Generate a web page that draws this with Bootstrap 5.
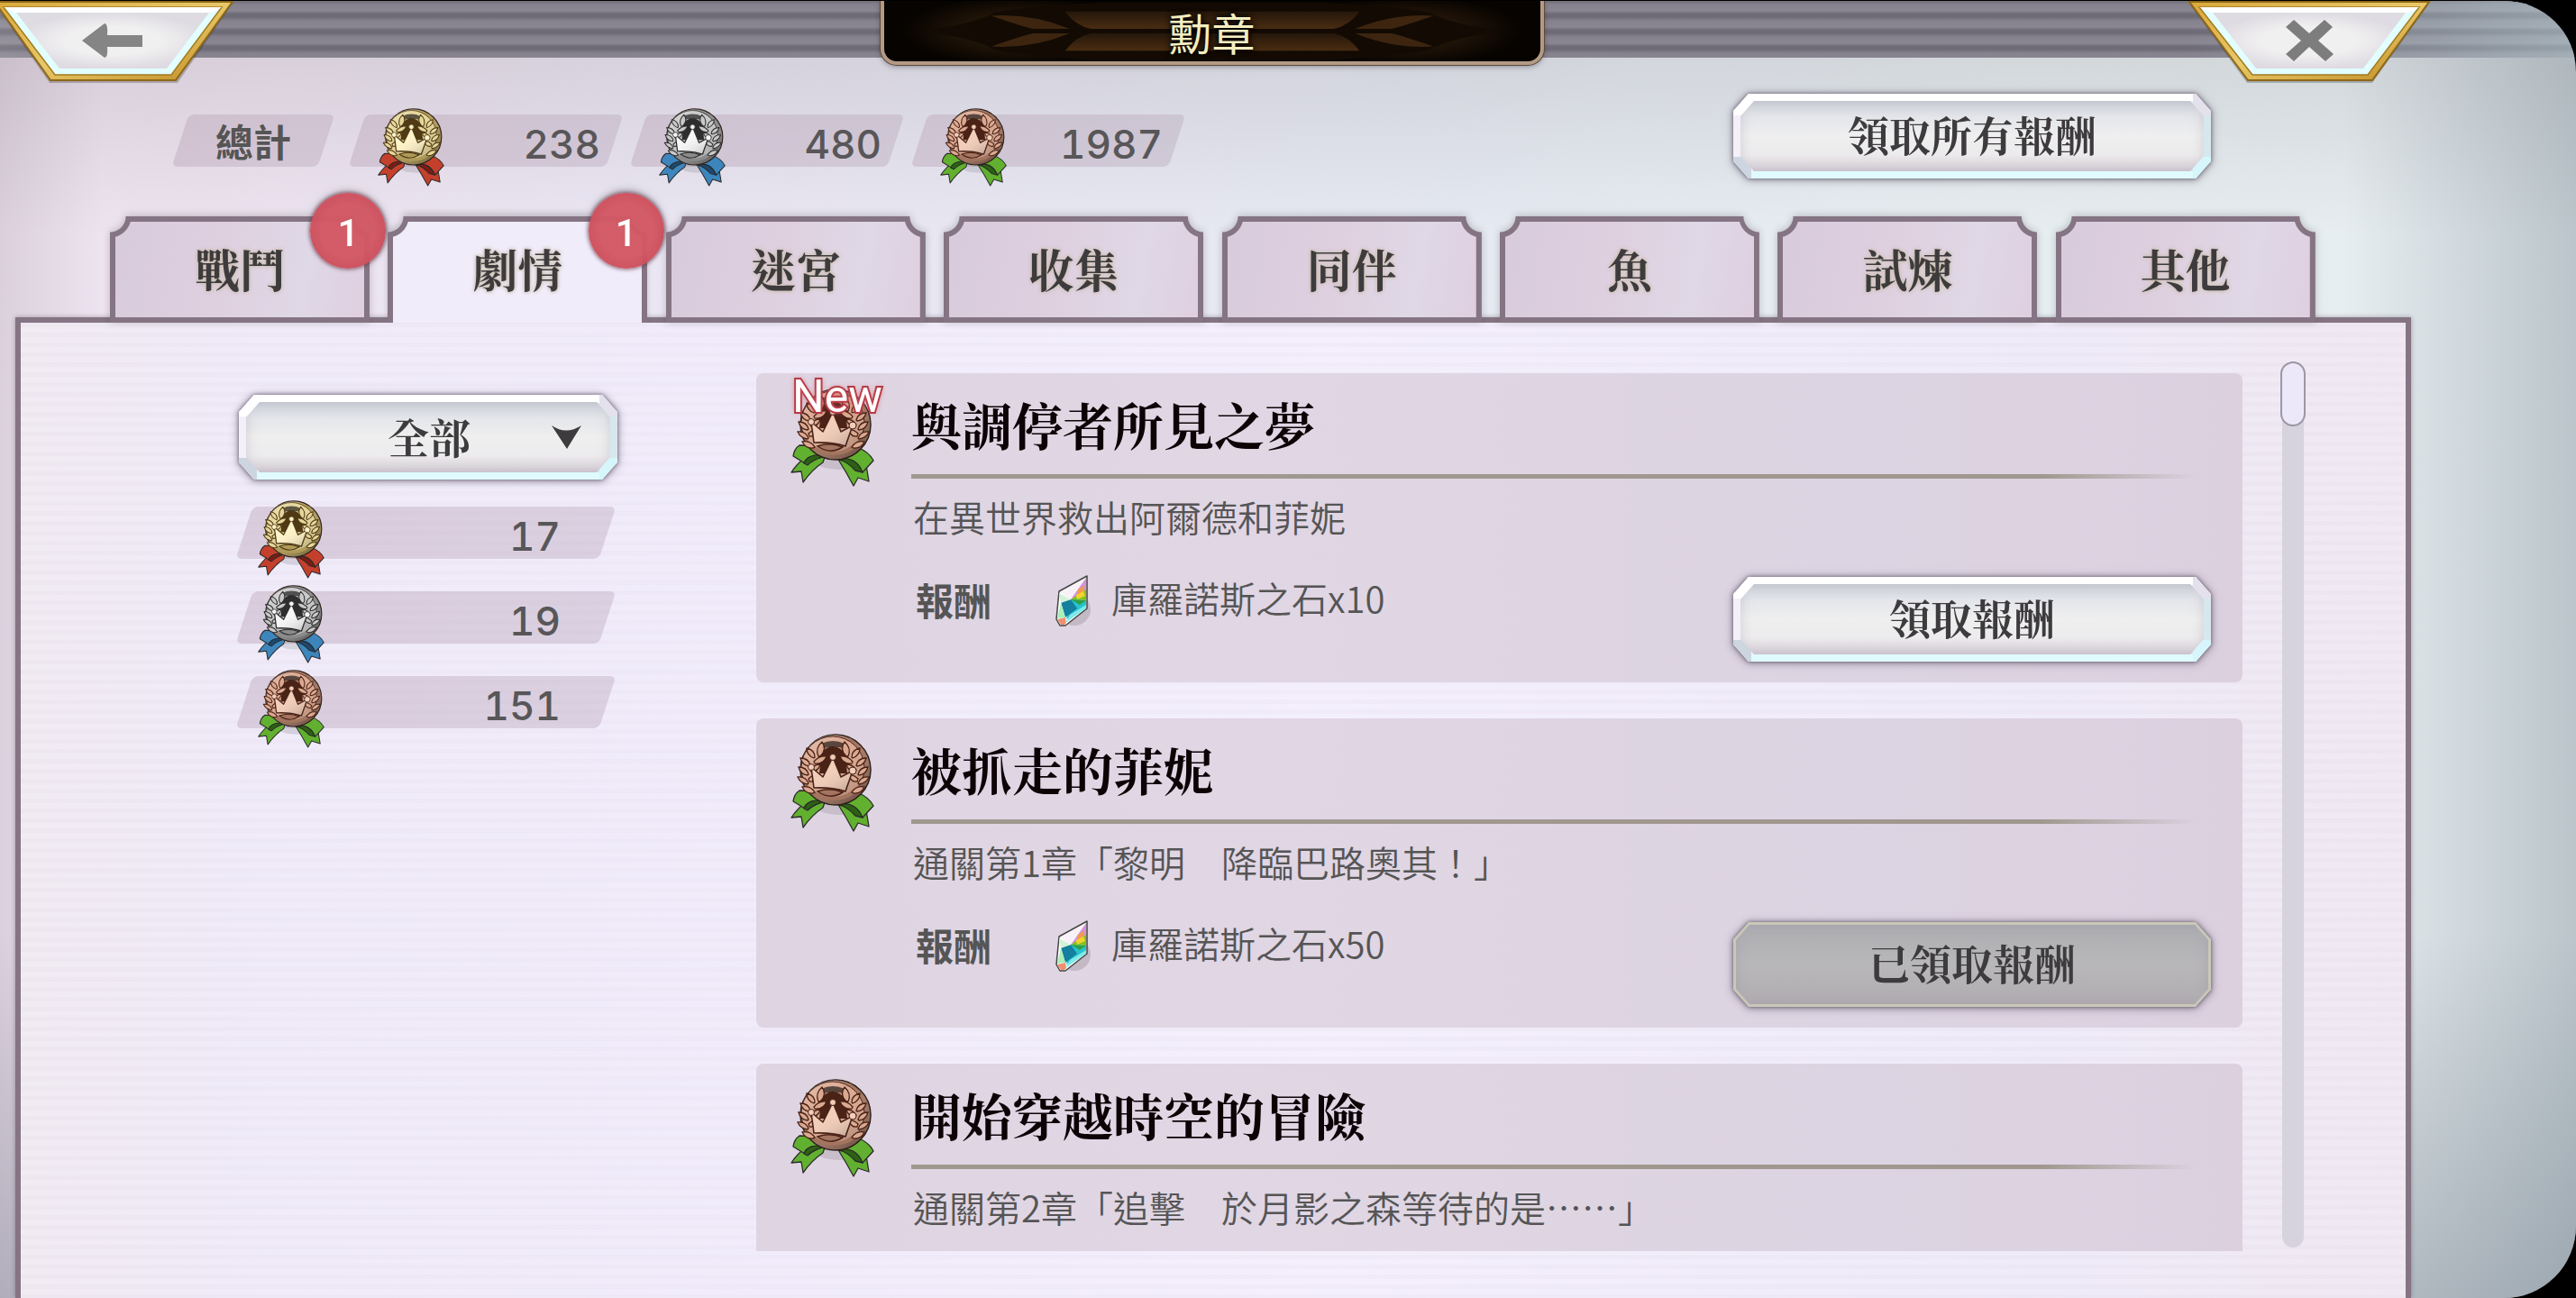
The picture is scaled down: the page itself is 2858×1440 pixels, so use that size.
<!DOCTYPE html>
<html lang="zh-Hant">
<head>
<meta charset="utf-8">
<meta name="viewport" content="width=device-width, initial-scale=1">
<title>勳章</title>
<link href="https://cdn.jsdelivr.net/npm/bootstrap@5.3.0/dist/css/bootstrap.min.css" rel="stylesheet">
<style>
:root{--edge:#857483;--ink:#3d3b3d;--serif:"Noto Serif CJK TC","Noto Sans CJK TC",serif;--sans:"Noto Sans CJK TC",sans-serif;--num:Inter,"Noto Sans CJK TC",sans-serif}
body{background:#000;font-family:var(--sans);color:#555;overflow:hidden}
.stage{height:100vh;border-top:1px solid #000;border-radius:0 80px 80px 0;overflow:hidden;
 background:
 linear-gradient(90deg,rgba(120,110,125,.16),transparent 4%,transparent 91%,rgba(110,125,138,.36)),
 linear-gradient(180deg,rgba(120,115,120,.24),transparent 18%,transparent 72%,rgba(100,110,125,.36)),
 linear-gradient(100deg,#efe2ef 0,#ebe6f3 22%,#e6e9f3 50%,#e7eef1 72%,#e6edef 100%)}
/* top bar */
.topbar{height:63px;background:linear-gradient(90deg,rgba(255,255,255,.1),transparent 8%,transparent 85%,rgba(190,215,220,.5)),repeating-linear-gradient(180deg,#706c79 0,#85828e 4px,#8a8792 11px,#706d7a 14px,#6d6a77 18px)}
.back-btn{margin-left:-8px}
.close-btn{margin-right:161px}
.crown-title{width:736px;height:71px;border:4px solid #b39a85;border-top:0;border-radius:0 0 18px 18px;background:#060300;box-shadow:0 0 0 1px #5d4a3a,0 2px 6px rgba(0,0,0,.35);overflow:hidden}
.crown-title svg{left:0;top:0;width:100%;height:100%}
.crown-title h1{font-size:48px;line-height:68px;font-weight:400;color:#f4eec0;text-shadow:0 0 6px #000,0 0 6px #000}
.corner-btn{width:270px;height:98px;border:0;background:none;padding:0;flex:none}
/* totals */
.totals{margin:63px 405px 0 190px;height:60px}
.totals-row{gap:6px}
.totals .gem-btn{margin-top:-23px}
.slab{position:relative;width:306px;height:58px}
.slab::before{content:"";position:absolute;inset:0 10px;transform:skewX(-18deg);border-radius:6px;background:linear-gradient(90deg,rgba(186,163,182,.42),rgba(180,160,180,.36))}
.slab.tag{width:182px;margin-right:8px}
.slab.tag span{position:relative;font-size:42px;font-weight:700;line-height:58px}
.slab .tally{position:relative;font:500 44px/66px var(--num);font-variant-numeric:tabular-nums;color:#585658;padding-right:26px}
.medal-s{position:absolute;left:33px;top:-7px;width:74px;height:87px}
/* bevelled button */
.gem-btn{position:relative;border:0;background:none;padding:0 0 6px;height:94px;width:530px;font:700 46px/88px var(--serif);color:var(--ink);filter:drop-shadow(0 0 2px rgba(60,50,70,.6)) drop-shadow(0 1px 5px rgba(60,50,70,.5));flex:none}
.gem-btn::before,.gem-btn::after{content:"";position:absolute;inset:0;clip-path:polygon(17px 0,calc(100% - 17px) 0,100% 19px,100% calc(100% - 19px),calc(100% - 17px) 100%,17px 100%,0 calc(100% - 19px),0 19px)}
.gem-btn::before{background:
 linear-gradient(#fff,#fff) 0 0/22px 24px no-repeat,
 linear-gradient(#e4e1ec,#e4e1ec) 100% 0/20px 24px no-repeat,
 linear-gradient(#cdd6e0,#cdd6e0) 0 100%/20px 24px no-repeat,
 linear-gradient(#d6f6fb,#d6f6fb) 100% 100%/20px 24px no-repeat,
 linear-gradient(#fff,#fff) 0 0/100% 9px no-repeat,
 linear-gradient(#dffbfe,#dffbfe) 0 100%/100% 8px no-repeat,
 linear-gradient(90deg,#f4f0fa 50%,#d6e8ee 50%)}
.gem-btn::after{inset:8px;background:linear-gradient(180deg,#ced2da 0,#e4e6ea 24%,#efefef 50%,#ecebed 76%,#d6ced6 100%);box-shadow:inset 0 0 14px rgba(150,140,160,.35);clip-path:polygon(15px 0,calc(100% - 15px) 0,100% 17px,100% calc(100% - 17px),calc(100% - 15px) 100%,15px 100%,0 calc(100% - 17px),0 17px)}
.gem-btn>span,.gem-btn>select,.gem-btn>svg{position:relative;z-index:1}
.gem-btn.done::before{background:#c9c8b8}
.gem-btn.done::after{inset:3px;background:linear-gradient(180deg,#adadb1,#b8b7b9 50%,#b1adb1)}
.gem-btn.done{color:var(--ink);opacity:1}
.picker{width:420px}
.picker select{width:100%;height:94px;border:0;background:none;appearance:none;font:700 46px/88px var(--serif);color:var(--ink);text-align-last:center;padding:0 0 4px 2px}
.picker>svg{position:absolute;right:40px;top:34px;width:33px;height:26px;pointer-events:none}
/* tabs */
.tabs{margin:53px 289px -6px 122px;gap:20px;position:relative;z-index:2}
.tab-btn{position:relative;flex:1 1 0;height:118px;border:0;background:none;padding:0 0 4px;font:700 50px/110px var(--serif);color:var(--ink);text-shadow:0 0 4px #cbbfae,0 0 4px #cbbfae;filter:drop-shadow(0 -1px 4px rgba(60,60,60,.28))}
.tab-btn::before,.tab-btn::after{content:"";position:absolute}
.tab-btn::before{inset:0;background:var(--edge);
 -webkit-mask:radial-gradient(circle at 0 0,transparent 17px,#000 18px) 0 0/51% 100% no-repeat,radial-gradient(circle at 100% 0,transparent 17px,#000 18px) 100% 0/51% 100% no-repeat;
 mask:radial-gradient(circle at 0 0,transparent 17px,#000 18px) 0 0/51% 100% no-repeat,radial-gradient(circle at 100% 0,transparent 17px,#000 18px) 100% 0/51% 100% no-repeat}
.tab-btn::after{inset:6px;background:linear-gradient(100deg,#d8cbdc,#dfd0e0 45%,#dfd8e6 75%,#dfcfe0);
 -webkit-mask:radial-gradient(circle at -6px -6px,transparent 23px,#000 24px) 0 0/51% 100% no-repeat,radial-gradient(circle at calc(100% + 6px) -6px,transparent 23px,#000 24px) 100% 0/51% 100% no-repeat;
 mask:radial-gradient(circle at -6px -6px,transparent 23px,#000 24px) 0 0/51% 100% no-repeat,radial-gradient(circle at calc(100% + 6px) -6px,transparent 23px,#000 24px) 100% 0/51% 100% no-repeat}
.tab-btn.active{filter:drop-shadow(0 -4px 3px rgba(60,60,60,.22))}
.tab-btn.active::after{bottom:0;background:#f0ecfa}
.tab-btn>span{position:relative;z-index:1}
.tab-btn>.dot{position:absolute;z-index:3;right:-18px;top:-26px;width:84px;height:84px;border-radius:50%;background:radial-gradient(circle,rgba(210,88,100,.97) 50%,rgba(198,66,80,.97));box-shadow:0 0 4px 1px rgba(90,40,60,.7);font:500 42px/90px Roboto,sans-serif;color:#fff;text-shadow:none}
/* panel */
.panel{margin:0 183px 0 17px;border:6px solid var(--edge);border-bottom:0;min-height:0;padding:0 113px 52px 238px;box-shadow:0 0 5px rgba(60,50,60,.4);
 background:repeating-linear-gradient(180deg,rgba(220,208,225,.14) 0 5px,transparent 5px 11px),linear-gradient(90deg,#f1ebf2 0,#f0ebf9 9%,#f1ecfb 30%,#f4effd 55%,#efebf9 85%,#f0e9f2 100%)}
.side{width:423px;flex:none;padding-top:80px;margin-right:155px}
.side .gem-btn{margin-left:4px}
.side-list{margin-top:30px;gap:36px}
.side .slab{width:100%}
.side .slab .medal-s{left:25px}
.side .slab .tally{padding-right:62px}
.list{flex:1 1 0;min-width:0;overflow-y:auto;scrollbar-width:none;margin-top:36px;padding-top:20px;gap:40px}
.list::-webkit-scrollbar{display:none}
.quest{position:relative;flex:none;min-height:343px;border-radius:8px;background:linear-gradient(90deg,#dfd4e2,#e1d6e4 30%,#dcd4e2 75%,#dcd0df);padding:20px 35px 23px 172px}
.quest h2{font:700 56px/72px var(--serif);color:#0d0306;margin:0}
.rule{height:5px;margin:20px 16px 12px 0;background:linear-gradient(90deg,#a0988f 0,#a0988f 88%,transparent)}
.quest p{font-size:40px;line-height:60px;font-weight:350;margin:0 0 37px 2px;color:#555}
.medal-l{position:absolute;left:38px;top:17px;width:93px;height:109px}
.fresh{position:absolute;left:40px;top:0;font:400 50px/52px Roboto,sans-serif;color:#fff;-webkit-text-stroke:4px #b03540;paint-order:stroke fill;text-shadow:0 0 6px #d0505a}
.prize{line-height:46px;font-size:40px;font-weight:350;padding-left:5px}
.prize b{font-size:42px;font-weight:700;line-height:50px;width:153px}
.prize svg{width:42px;height:58px;margin:-2px 22px 0 0}
.track{width:24px;flex:none;margin:43px 0 4px 44px;border-radius:12px;background:#d6d3de}
.thumb{width:28px;height:72px;margin-left:-2px;border-radius:14px;border:2px solid #9c97a3;background:#ece8fa}
.gold{--m1:#e6d69a;--m2:#b09a58;--m3:#4f3a14;--m4:#fff3c8;--r1:#c5402c;--r2:#7c1d14}
.silver{--m1:#c9c9c9;--m2:#8b8b8b;--m3:#2e2e2e;--m4:#f6f6f6;--r1:#3c86bd;--r2:#1c4a70}
.bronze{--m1:#dba991;--m2:#a3745f;--m3:#4a2216;--m4:#f2cdb9;--r1:#62b02f;--r2:#2c6213}
</style>
<script src="https://cdn.jsdelivr.net/npm/bootstrap@5.3.0/dist/js/bootstrap.bundle.min.js"></script>
</head>
<body>
<svg width="0" height="0" class="position-absolute" aria-hidden="true">
 <defs>
  <linearGradient id="shine" x1="0" y1="0" x2=".8" y2="1"><stop offset="0" stop-color="#fff" stop-opacity=".55"/><stop offset=".4" stop-color="#fff" stop-opacity="0"/><stop offset="1" stop-color="#000" stop-opacity=".35"/></linearGradient>
  <linearGradient id="gold" x1="0" y1="0" x2="1" y2="1"><stop offset="0" stop-color="#d9a93c"/><stop offset=".5" stop-color="#e8c869"/><stop offset="1" stop-color="#c08c22"/></linearGradient>
  <radialGradient id="face"><stop offset=".5" stop-color="#f1f0f0"/><stop offset="1" stop-color="#dedbe2"/></radialGradient>
  <radialGradient id="haze"><stop offset="0" stop-color="#3a2410"/><stop offset="1" stop-color="#3a2410" stop-opacity="0"/></radialGradient>
  <linearGradient id="bar" x1="0" y1="0" x2="0" y2="1"><stop offset="0" stop-color="#25170a"/><stop offset="1" stop-color="#4a2c12"/></linearGradient>
  <symbol id="leaves" viewBox="0 0 93 109" overflow="visible">
   <path d="M31 25q-4-9 4-16q6 9-2 16zM26 27q-8-3-8-11q9 2 9 10zM26 31q6-7 14-6q-3 9-13 8zM21 36q-8-1-10-9q9 0 11 8zM22 40q4-6 11-6q-2 8-10 8zM19 46q-8-1-10-9q9 0 11 8zM20 50q5-5 10-4q-2 8-9 7zM19 56q-8-1-11-8q9-1 12 7zM25 66q-8 1-12-7q9-2 14 6z" fill="var(--m1)" stroke="var(--m3)" stroke-width="1.3"/>
  </symbol>
  <symbol id="medal" viewBox="0 0 93 109">
   <ellipse cx="55" cy="78" rx="30" ry="12" fill="#000" opacity=".1"/>
   <g stroke="#2b2b2b" stroke-width="1.3" stroke-linejoin="round">
    <path d="M38 76L22 72Q8 82 1 93l11-1 2 12q10-14 22-22z" fill="var(--r1)"/>
    <path d="M10 63Q4 67 3 75l13 8q14-9 26-7L38 64z" fill="var(--r1)"/>
    <path d="M15 83q3-10 20-9l6 1q-14 2-22 10z" fill="var(--r2)"/>
    <path d="M52 77q10 16 18 31l5-9 12 4-3-18L66 72z" fill="var(--r1)"/>
    <path d="M74 65q14 6 18 15L80 93Q70 82 50 78L56 66z" fill="var(--r1)"/>
    <path d="M53 78q20-3 27 15l-8-2q-8-9-19-13z" fill="var(--r2)"/>
   </g>
   <ellipse cx="50" cy="40" rx="39" ry="39" fill="var(--m2)" stroke="#2b1c16" stroke-width="1.500"/>
   <ellipse cx="50" cy="40" rx="39" ry="39" fill="url(#shine)"/>
   <circle cx="47" cy="38" r="35" fill="var(--m1)" stroke="var(--m3)" stroke-width="1"/>
   <circle cx="47" cy="38" r="35" fill="url(#shine)" opacity=".5"/>
   <path d="M34 24q4-10 13-10t14 10l2 20H32z" fill="var(--m3)"/>
   <path d="M34 11q13-6 26 0l2 6q-14-5-29 0z" fill="#000" opacity=".6"/>
   <path d="M16 54q14 16 31 16t31-16l-6 12q-11 8-25 8t-25-8z" fill="var(--m2)"/>
   <use href="#leaves" width="93" height="109"/>
   <use href="#leaves" width="93" height="109" transform="matrix(-1 0 0 1 95 0)"/>
   <path d="M23 37l13 11 11-22 9 22 13-7-8 23q-16-5-35-4z" fill="var(--m4)" stroke="var(--m3)" stroke-width="1.600" stroke-linejoin="round"/>
   <path d="M23 37l13 11 11-22 9 22 13-7-8 23q-16-5-35-4z" fill="url(#shine)" opacity=".5"/>
   <path d="M30 64q14-5 28 1q-14 9-28-1z" fill="var(--m2)" stroke="var(--m3)" stroke-width="1.500"/>
   <g fill="var(--m4)" stroke="var(--m3)"><circle cx="47" cy="26" r="3.500"/><circle cx="23" cy="37" r="3.500"/><circle cx="69" cy="41" r="4"/></g>
  </symbol>
  <symbol id="stone" viewBox="0 0 42 58">
   <ellipse cx="23" cy="38" rx="18" ry="18" fill="#000" opacity=".13"/>
   <path d="M37 1L6 18 3 49l4 7h6L37 37z" fill="#fff" stroke="#444" stroke-width="1.500" stroke-linejoin="round"/>
   <path d="M36 3L19 27 7 19z" fill="#f8f2f8"/><path d="M36 3v19l-17 5z" fill="#d78fdf"/>
   <path d="M36 16v12l-17-1z" fill="#7fc31c"/><path d="M27 16l7-5 0 8-9 6z" fill="#f09a52"/><path d="M25 22l8-4 2 5-9 4z" fill="#f2d429"/>
   <path d="M19 27l17 1v8L14 49z" fill="#28c3cf"/><path d="M19 27L8 30l5 17 13-10z" fill="#147f9e"/>
   <path d="M19 27l10 6 7-5z" fill="#2fa043"/>
   <path d="M6 20l13 7L8 31z" fill="#d4f2d8"/><path d="M8 31l5 16-9 1z" fill="#a9efb8"/><path d="M4 49l9-2 1 6-2 2H8z" fill="#ef8f6e"/><path d="M18 44l18-11v4L13 53z" fill="#7eeaea"/>
  </symbol>
  <g id="half">
   <ellipse cx="150" cy="34" rx="130" ry="40" fill="url(#haze)"/>
   <path d="M42 34.500Q100 27 125 13Q165 6 240 2h128v66H240Q165 63 125 56Q100 42 42 34.500z" fill="#130b03"/>
   <path d="M120 17q45-3 88 15h-41q-16-4-47-15zM120 52q45 3 88-15h-41q-16 4-47 15z" fill="#3d250f"/>
   <path d="M203 12h167v20H232q-18-4-29-20z" fill="url(#bar)"/><path d="M203 57h167V37H232q-18 4-29 20z" fill="url(#bar)"/>
  </g>
 </defs>
</svg>

<div class="stage d-flex flex-column">
 <header class="topbar d-flex align-items-start flex-shrink-0">
  <button class="corner-btn back-btn" type="button" aria-label="返回">
   <svg viewBox="0 0 270 98" width="270" height="98">
    <path d="M2 3H266L205 91H63z" fill="#000" opacity=".22"/>
    <path d="M2 1H266L203 88H64z" fill="url(#gold)" stroke="#8d6818" stroke-width="2"/>
    <path d="M12 7H254L198 82H69z" fill="#e2feff" stroke="#a37a1e" stroke-width="1.500"/>
    <path d="M12 7H254L244 13H24z" fill="#fff"/><path d="M26 13H240L193 75H74z" fill="url(#face)"/>
    <path d="M99 44l25-19q4 0 3 13h39v13h-39q1 12-3 12z" fill="#858585"/>
   </svg>
  </button>
  <div class="flex-grow-1 d-flex justify-content-center">
   <div class="crown-title position-relative text-center">
    <svg class="position-absolute" viewBox="0 0 736 69" preserveAspectRatio="none" aria-hidden="true"><use href="#half"/><use href="#half" transform="matrix(-1 0 0 1 736 0)"/></svg>
    <h1 class="position-relative m-0">勳章</h1>
   </div>
  </div>
  <button class="corner-btn close-btn" type="button" aria-label="關閉">
   <svg viewBox="0 0 270 98" width="270" height="98">
    <path d="M2 3H268L205 91H66z" fill="#000" opacity=".22"/>
    <path d="M2 1H268L205 88H67z" fill="url(#gold)" stroke="#8d6818" stroke-width="2"/>
    <path d="M13 7H257L200 82H72z" fill="#e2feff" stroke="#a37a1e" stroke-width="1.500"/>
    <path d="M13 7H257L246 13H26z" fill="#fff"/><path d="M28 13H242L195 75H76z" fill="url(#face)"/>
    <path d="M109 29l9-8 17 15 17-15 9 8-16 15 17 15-9 8-18-16-17 16-9-8 17-15z" fill="#7d7d7d"/>
   </svg>
  </button>
 </header>

 <section class="totals d-flex align-items-start flex-shrink-0">
  <div class="totals-row d-flex flex-grow-1">
   <div class="slab tag text-center"><span>總計</span></div>
   <div class="slab text-end"><svg class="medal-s gold"><use href="#medal"/></svg><div class="tally">238</div></div>
   <div class="slab text-end"><svg class="medal-s silver"><use href="#medal"/></svg><div class="tally">480</div></div>
   <div class="slab text-end"><svg class="medal-s bronze"><use href="#medal"/></svg><div class="tally">1987</div></div>
  </div>
  <button class="gem-btn" type="button"><span>領取所有報酬</span></button>
 </section>

 <nav class="tabs d-flex flex-shrink-0" role="tablist">
  <button class="tab-btn" role="tab" type="button"><span>戰鬥</span><span class="dot">1</span></button>
  <button class="tab-btn active" role="tab" type="button" aria-selected="true"><span>劇情</span><span class="dot">1</span></button>
  <button class="tab-btn" role="tab" type="button"><span>迷宮</span></button>
  <button class="tab-btn" role="tab" type="button"><span>收集</span></button>
  <button class="tab-btn" role="tab" type="button"><span>同伴</span></button>
  <button class="tab-btn" role="tab" type="button"><span>魚</span></button>
  <button class="tab-btn" role="tab" type="button"><span>試煉</span></button>
  <button class="tab-btn" role="tab" type="button"><span>其他</span></button>
 </nav>

 <main class="panel d-flex flex-grow-1">
  <aside class="side">
   <div class="gem-btn picker">
    <select aria-label="篩選"><option>全部</option></select>
    <svg viewBox="0 0 33 26"><path d="M0 0Q16 11 33 0L17 26z" fill="#3d3b3d"/></svg>
   </div>
   <div class="side-list d-flex flex-column">
    <div class="slab text-end"><svg class="medal-s gold"><use href="#medal"/></svg><div class="tally">17</div></div>
    <div class="slab text-end"><svg class="medal-s silver"><use href="#medal"/></svg><div class="tally">19</div></div>
    <div class="slab text-end"><svg class="medal-s bronze"><use href="#medal"/></svg><div class="tally">151</div></div>
   </div>
  </aside>
  <div class="list d-flex flex-column">
   <article class="quest">
    <svg class="medal-l bronze"><use href="#medal"/></svg><span class="fresh">New</span>
    <h2>與調停者所見之夢</h2><div class="rule"></div>
    <p>在異世界救出阿爾德和菲妮</p>
    <div class="d-flex justify-content-between align-items-start">
     <div class="prize d-flex"><b>報酬</b><svg><use href="#stone"/></svg><span>庫羅諾斯之石x10</span></div>
     <button class="gem-btn" type="button"><span>領取報酬</span></button>
    </div>
   </article>
   <article class="quest">
    <svg class="medal-l bronze"><use href="#medal"/></svg>
    <h2>被抓走的菲妮</h2><div class="rule"></div>
    <p>通關第1章「黎明　降臨巴路奧其！」</p>
    <div class="d-flex justify-content-between align-items-start">
     <div class="prize d-flex"><b>報酬</b><svg><use href="#stone"/></svg><span>庫羅諾斯之石x50</span></div>
     <button class="gem-btn done" type="button" disabled><span>已領取報酬</span></button>
    </div>
   </article>
   <article class="quest">
    <svg class="medal-l bronze"><use href="#medal"/></svg>
    <h2>開始穿越時空的冒險</h2><div class="rule"></div>
    <p>通關第2章「追擊　於月影之森等待的是……」</p>
   </article>
  </div>
  <div class="track"><div class="thumb"></div></div>
 </main>
</div>
</body>
</html>
